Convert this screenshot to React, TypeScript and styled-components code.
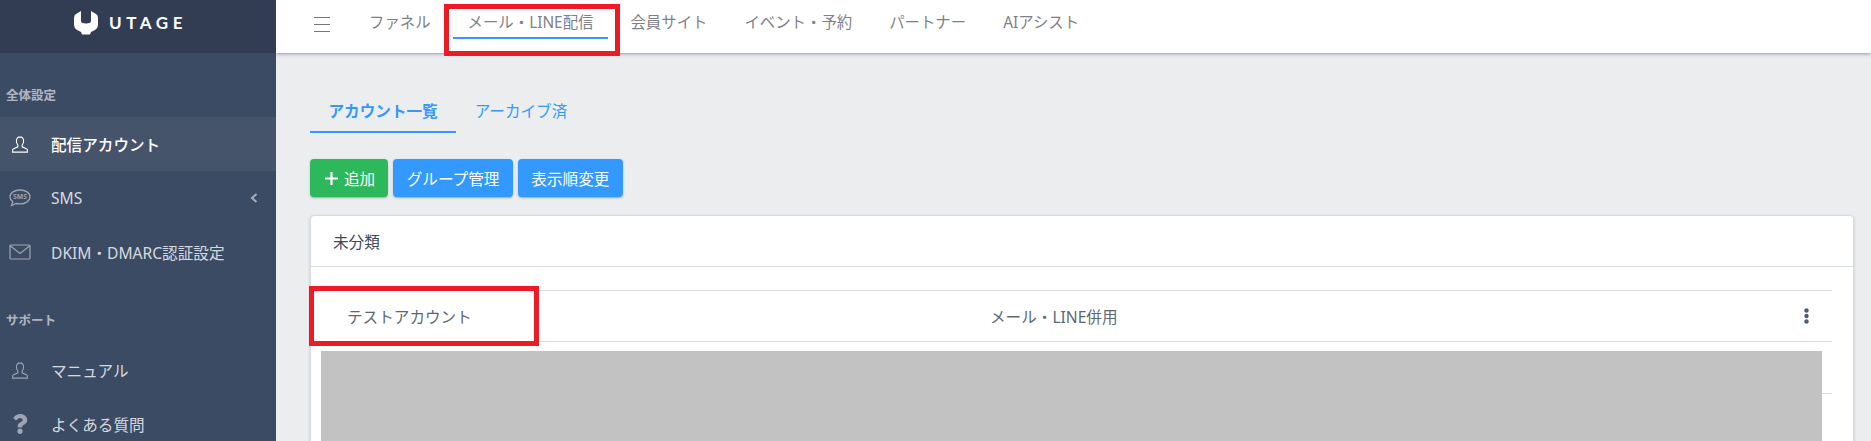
import React from "react";
import styled, { createGlobalStyle } from "styled-components";
import { FaQuestion } from "react-icons/fa";

const GlobalStyle = createGlobalStyle`
  html, body {
    margin: 0;
    padding: 0;
    background: #ebedef;
  }
  body {
    font-family: "Noto Sans", "Noto Sans CJK JP", sans-serif;
    font-size: 15.6px;
    overflow: hidden;
  }
`;

const Page = styled.div`
  position: relative;
  display: flex;
  width: 1871px;
  height: 441px;
  overflow: hidden;
`;

const Sidebar = styled.aside`
  flex: 0 0 276px;
  background: #3c4b64;
  color: rgba(255, 255, 255, 0.8);
`;

const Brand = styled.div`
  display: flex;
  align-items: center;
  height: 53px;
  padding: 0 0 8px 74px;
  box-sizing: border-box;
  background: #323d54;
  color: #fff;
`;

const BrandName = styled.span`
  margin-left: 11px;
  font-family: "Lato", "Noto Sans", sans-serif;
  font-size: 17px;
  font-weight: 700;
  letter-spacing: 4.6px;
`;

const NavTitle = styled.div<{ $top: number }>`
  display: flex;
  align-items: flex-start;
  height: 64px;
  padding: ${(p) => p.$top}px 0 0 6px;
  box-sizing: border-box;
  font-size: 12.5px;
  font-weight: 700;
  color: rgba(255, 255, 255, 0.62);
`;

const NavItem = styled.div<{ $active?: boolean }>`
  display: flex;
  align-items: center;
  height: 54px;
  background: ${(p) => (p.$active ? "rgba(255, 255, 255, 0.05)" : "transparent")};
  color: ${(p) => (p.$active ? "#fff" : "rgba(255, 255, 255, 0.8)")};
  font-weight: ${(p) => (p.$active ? 500 : 400)};
`;

const NavIcon = styled.span<{ $active?: boolean }>`
  display: flex;
  align-items: center;
  justify-content: center;
  flex: 0 0 40px;
  margin-right: 11px;
  color: ${(p) => (p.$active ? "#fff" : "rgba(255, 255, 255, 0.5)")};
`;

const Chevron = styled.span`
  display: flex;
  margin-left: auto;
  padding-right: 18px;
  color: rgba(255, 255, 255, 0.55);
`;

const Main = styled.main`
  flex: 1;
  min-width: 0;
`;

const Header = styled.header`
  display: flex;
  align-items: flex-start;
  height: 53px;
  padding-left: 38px;
  background: #fff;
  box-shadow: 0 2px 2px 0 rgba(60, 75, 100, 0.14), 0 3px 1px -2px rgba(60, 75, 100, 0.12),
    0 1px 5px 0 rgba(60, 75, 100, 0.2);
`;

const Toggler = styled.span`
  display: flex;
  margin: 17px 20.5px 0 0;
  color: #77777f;
`;

const HeaderLink = styled.a<{ $active?: boolean }>`
  height: 39px;
  margin: 0 4px;
  padding: 0 14.5px;
  box-sizing: border-box;
  font-size: 15.4px;
  line-height: 46px;
  white-space: nowrap;
  color: #7f7f89;
  border-bottom: 2px solid ${(p) => (p.$active ? "#39f" : "transparent")};
`;

const Body = styled.div`
  padding: 38px 17px 0 34px;
`;

const Tabs = styled.div`
  display: flex;
`;

const Tab = styled.a<{ $active?: boolean }>`
  height: 42px;
  padding: 0 18.5px;
  box-sizing: border-box;
  line-height: 40px;
  color: #39f;
  font-weight: ${(p) => (p.$active ? 700 : 400)};
  border-bottom: 2px solid ${(p) => (p.$active ? "#39f" : "transparent")};
`;

const Toolbar = styled.div`
  display: flex;
  gap: 5px;
  margin: 26px 0 18px;
`;

const Button = styled.button<{ $green?: boolean }>`
  display: flex;
  align-items: center;
  gap: 6.5px;
  height: 38px;
  padding: ${(p) => (p.$green ? "0 13px 0 14.5px" : "0 13.5px")};
  border: 0;
  border-radius: 4px;
  font: inherit;
  color: #fff;
  background: ${(p) => (p.$green ? "#2eb85c" : "#39f")};
  box-shadow: 0 1px 1px 0 rgba(60, 75, 100, 0.14), 0 2px 1px -1px rgba(60, 75, 100, 0.12),
    0 1px 3px 0 rgba(60, 75, 100, 0.2);
`;

const Card = styled.section`
  height: 400px;
  background: #fff;
  border: 1px solid #d8dbe0;
  border-radius: 4px;
  box-shadow: 0 1px 1px 0 rgba(60, 75, 100, 0.14), 0 2px 1px -1px rgba(60, 75, 100, 0.12),
    0 1px 3px 0 rgba(60, 75, 100, 0.2);
`;

const CardHeader = styled.div`
  height: 50px;
  padding-left: 22px;
  line-height: 52px;
  color: #3c4b64;
  border-bottom: 1px solid #d8dbe0;
`;

const CardBody = styled.div`
  padding: 23px 21px 0 22px;
`;

const Row = styled.div`
  display: grid;
  grid-template-columns: 657px 1fr 52px;
  align-items: center;
  height: 50px;
  border-top: 1px solid #d8dbe0;
  color: #5c6873;
  &:last-child {
    height: 51px;
    border-bottom: 1px solid #d8dbe0;
  }
`;

const AccountName = styled.span`
  padding-left: 14px;
`;

const MoreIcon = styled.svg`
  display: block;
  margin-left: 24px;
  color: #4f5d73;
`;

const Redaction = styled.div`
  position: absolute;
  left: 321px;
  top: 351px;
  width: 1501px;
  height: 90px;
  background: #c2c2c2;
`;

const Callout = styled.div`
  position: absolute;
  box-sizing: border-box;
  border: 5px solid #ed1c24;
`;

const HeaderCallout = styled(Callout)`
  left: 444px;
  top: 4px;
  width: 176px;
  height: 52px;
`;

const RowCallout = styled(Callout)`
  left: 309px;
  top: 286px;
  width: 230px;
  height: 60px;
`;

function LogoIcon() {
  return (
    <svg width="24" height="25" viewBox="0 0 24 25" fill="currentColor">
      <path d="M7 1L2 4Q0 5 0 8L0 15Q0 18 3 20L7 22L8 24.500L16 24.500L17 22L21 20Q24 18 24 15L24 8Q24 5 22 4L17 1L17 11Q17 13.500 12 13.500Q7 13.500 7 11Z" />
    </svg>
  );
}

function UserIcon() {
  return (
    <svg width="18" height="19" viewBox="0 0 20 20" fill="none" stroke="currentColor" strokeWidth="1.2">
      <path d="M10 1.500c-2.600 0-4 2-4 4.500 0 2 .8 3.600 1.600 4.600v2L3 14.600c-.8.4-1.200 1-1.200 1.800v2.100h16.400v-2.100c0-.8-.4-1.400-1.200-1.800l-4.600-2v-2c.8-1 1.600-2.600 1.600-4.600 0-2.500-1.400-4.500-4-4.500z" />
    </svg>
  );
}

function SmsIcon() {
  return (
    <svg width="22" height="18" viewBox="0 0 22 18" fill="none" stroke="currentColor" strokeWidth="1.3">
      <path d="M11 1C5.500 1 1 3.800 1 7.800c0 2 1.100 3.700 2.800 4.900L2.500 16.500l4.500-2c1.200.3 2.600.4 4 .4 5.500 0 10-3.100 10-7.100S16.500 1 11 1z" />
      <text x="11" y="10.300" textAnchor="middle" fontSize="6.800" fontWeight="700" fill="currentColor" stroke="none">
        SMS
      </text>
    </svg>
  );
}

function EnvelopeIcon() {
  return (
    <svg width="22" height="16" viewBox="0 0 22 16" fill="none" stroke="currentColor" strokeWidth="1.2">
      <rect x="1" y="1" width="20" height="14" rx="1" />
      <path d="M1.500 2l9.500 7.500L20.500 2" />
    </svg>
  );
}

function ChevronIcon() {
  return (
    <svg width="8" height="10" viewBox="0 0 8 10" fill="none" stroke="currentColor" strokeWidth="2">
      <path d="M6.500 1L2 5l4.500 4" />
    </svg>
  );
}

function HamburgerIcon() {
  return (
    <svg width="16" height="15" viewBox="0 0 16 15" stroke="currentColor" strokeWidth="1">
      <path d="M0 .5h16M0 7.500h16M0 14.500h16" />
    </svg>
  );
}

const headerLinks = ["ファネル", "メール・LINE配信", "会員サイト", "イベント・予約", "パートナー", "AIアシスト"];

export default function App() {
  return (
    <Page>
      <GlobalStyle />
      <Sidebar>
        <Brand>
          <LogoIcon />
          <BrandName>UTAGE</BrandName>
        </Brand>
        <NavTitle $top={32}>全体設定</NavTitle>
        <NavItem $active>
          <NavIcon $active>
            <UserIcon />
          </NavIcon>
          配信アカウント
        </NavItem>
        <NavItem>
          <NavIcon>
            <SmsIcon />
          </NavIcon>
          SMS
          <Chevron>
            <ChevronIcon />
          </Chevron>
        </NavItem>
        <NavItem>
          <NavIcon>
            <EnvelopeIcon />
          </NavIcon>
          DKIM・DMARC認証設定
        </NavItem>
        <NavTitle $top={31}>サポート</NavTitle>
        <NavItem>
          <NavIcon>
            <UserIcon />
          </NavIcon>
          マニュアル
        </NavItem>
        <NavItem>
          <NavIcon>
            <FaQuestion size={20} />
          </NavIcon>
          よくある質問
        </NavItem>
      </Sidebar>
      <Main>
        <Header>
          <Toggler>
            <HamburgerIcon />
          </Toggler>
          {headerLinks.map((label) => (
            <HeaderLink key={label} $active={label === "メール・LINE配信"}>
              {label}
            </HeaderLink>
          ))}
        </Header>
        <Body>
          <Tabs>
            <Tab $active>アカウント一覧</Tab>
            <Tab>アーカイブ済</Tab>
          </Tabs>
          <Toolbar>
            <Button $green>
              <svg width="13" height="13" viewBox="0 0 13 13" stroke="currentColor" strokeWidth="2.200">
                <path d="M6.500 0v13M0 6.500h13" />
              </svg>
              追加
            </Button>
            <Button>グループ管理</Button>
            <Button>表示順変更</Button>
          </Toolbar>
          <Card>
            <CardHeader>未分類</CardHeader>
            <CardBody>
              <Row>
                <AccountName>テストアカウント</AccountName>
                <span>メール・LINE併用</span>
                <MoreIcon width="5" height="16" viewBox="0 0 5 16" fill="currentColor">
                  <circle cx="2.500" cy="2.500" r="2.200" />
                  <circle cx="2.500" cy="8" r="2.200" />
                  <circle cx="2.500" cy="13.500" r="2.200" />
                </MoreIcon>
              </Row>
              <Row />
            </CardBody>
          </Card>
        </Body>
      </Main>
      <Redaction />
      <HeaderCallout />
      <RowCallout />
    </Page>
  );
}
